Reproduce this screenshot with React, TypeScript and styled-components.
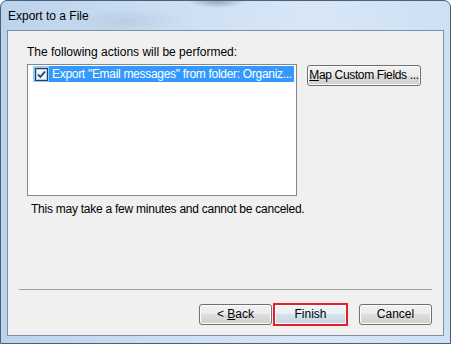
import styled, { createGlobalStyle } from 'styled-components';

const GlobalStyle = createGlobalStyle`
   html, body {
      margin: 0;
      padding: 0;
      background: #ffffff;
   }
   * {
      box-sizing: border-box;
   }
`;

const Window = styled.div`
   display: flex;
   flex-direction: column;
   width: 451px;
   height: 344px;
   border: 1px solid #4d5f75;
   border-radius: 7px 7px 0 0;
   background:
      radial-gradient(ellipse 30px 7px at 216px 0px, rgba(70, 90, 115, 0.45), transparent),
      radial-gradient(ellipse 60px 12px at 125px 20px, rgba(160, 178, 200, 0.35), transparent),
      linear-gradient(to right, #bcd3ec 0%, #cfe1f4 45%, #d7e7f8 70%, #cde0f4 100%);
   font-family: 'Liberation Sans', Arial, sans-serif;
   font-size: 12px;
   color: #000000;
   overflow: hidden;
`;

const TitleBar = styled.div`
   display: flex;
   align-items: center;
   height: 29px;
   padding-left: 7px;
   font-size: 12px;
   color: #000000;
`;

const Client = styled.div`
   display: flex;
   flex-direction: column;
   height: 306px;
   margin: 0 6px;
   border: 1px solid #7d8fa5;
   background: #f0f0f0;
`;

const Body = styled.div`
   display: flex;
   flex-direction: column;
   flex: 1;
   padding: 13px 0 0 19px;
`;

const Label = styled.div`
   line-height: 16px;
   height: 16px;
`;

const Row = styled.div`
   display: flex;
   align-items: flex-start;
   margin-top: 4px;
`;

const ListBox = styled.div`
   width: 270px;
   height: 132px;
   border: 1px solid #828790;
   background: #ffffff;
`;

const Item = styled.div`
   display: flex;
   height: 16px;
   margin: 1px 0 0 5px;
`;

const CheckCell = styled.div`
   display: flex;
   align-items: center;
   justify-content: center;
   width: 16px;
   height: 16px;
   background: #99c9f5;
`;

const ItemText = styled.div`
   width: 245px;
   padding-left: 3px;
   line-height: 16px;
   letter-spacing: -0.3px;
   background: #3399ff;
   color: #ffffff;
   white-space: nowrap;
   overflow: hidden;
`;

const Button = styled.button<{ $wide?: boolean; $marked?: boolean }>`
   display: block;
   flex: none;
   width: ${({ $wide, $marked }) => ($wide ? '114px' : $marked ? '75px' : '73px')};
   height: ${({ $marked }) => ($marked ? '23px' : '21px')};
   padding: 0;
   border: ${({ $marked }) => ($marked ? '2px solid #e3202b' : '1px solid #707070')};
   border-radius: ${({ $marked }) => ($marked ? '0' : '3px')};
   background: ${({ $marked }) =>
      $marked
         ? 'linear-gradient(to bottom, #f1f5f9 0%, #e9eff5 50%, #d6e2ec 50%, #c8d7e4 100%)'
         : 'linear-gradient(to bottom, #f2f2f2 0%, #ebebeb 50%, #dddddd 50%, #cfcfcf 100%)'};
   box-shadow: inset 0 0 0 1px #fbfbfb;
   font-family: 'Liberation Sans', Arial, sans-serif;
   font-size: 12px;
   letter-spacing: ${({ $wide }) => ($wide ? '-0.35px' : '0')};
   color: #000000;
   line-height: 15px;
   text-align: center;
   white-space: nowrap;
   overflow: hidden;
`;

const SideButton = styled(Button)`
   margin: 1px 0 0 10px;
`;

const Note = styled.div`
   margin-top: 6px;
   padding-left: 4px;
   line-height: 15px;
   letter-spacing: -0.25px;
`;

const Separator = styled.div`
   height: 1px;
   margin: 0 11px;
   background: #a0a0a0;
`;

const ButtonRow = styled.div`
   display: flex;
   align-items: center;
   justify-content: flex-end;
   height: 45px;
   padding: 13px 11px 9px 0;
`;

const Gap = styled.div<{ $w: number }>`
   width: ${({ $w }) => $w}px;
`;

const CheckBox = () => (
   <svg width='13' height='13' viewBox='0 0 13 13'>
      <rect x='0.5' y='0.5' width='12' height='12' fill='#dfe9f5' stroke='#1f3f66' />
      <rect x='1.5' y='1.5' width='10' height='10' fill='#eef4fb' stroke='#b8cde4' />
      <path d='M3 6.5 L5.3 9 L10 3.5' fill='none' stroke='#1c3b63' strokeWidth='1.8' />
   </svg>
);

const App = () => {
   return (
      <>
         <GlobalStyle />
         <Window>
            <TitleBar>Export to a File</TitleBar>
            <Client>
               <Body>
                  <Label>The following actions will be performed:</Label>
                  <Row>
                     <ListBox>
                        <Item>
                           <CheckCell>
                              <CheckBox />
                           </CheckCell>
                           <ItemText>Export "Email messages" from folder: Organiz...</ItemText>
                        </Item>
                     </ListBox>
                     <SideButton $wide>
                        <span>
                           <u>M</u>ap Custom Fields ...
                        </span>
                     </SideButton>
                  </Row>
                  <Note>This may take a few minutes and cannot be canceled.</Note>
               </Body>
               <Separator />
               <ButtonRow>
                  <Button>
                     <span>
                        &lt; <u>B</u>ack
                     </span>
                  </Button>
                  <Gap $w={1} />
                  <Button $marked>Finish</Button>
                  <Gap $w={11} />
                  <Button>Cancel</Button>
               </ButtonRow>
            </Client>
         </Window>
      </>
   );
};

export default App;
